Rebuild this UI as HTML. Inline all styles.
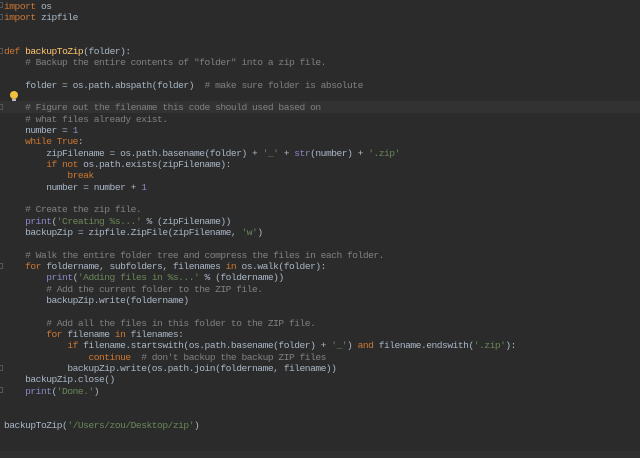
<!DOCTYPE html>
<html><head><meta charset="utf-8"><style>
html,body{margin:0;padding:0;background:#2b2b2b;width:640px;height:458px;overflow:hidden}
pre{position:absolute;left:4px;top:0.5px;margin:0;font-family:"Liberation Mono",monospace;font-size:9.6px;letter-spacing:-0.48px;line-height:11.33px;color:#a9b7c6;white-space:pre}
.k{color:#cc7832}.s{color:#6a8759}.c{color:#808080}.f{color:#ffc66d}.b{color:#8888c6}
.hl{position:absolute;left:0;width:640px;top:101px;height:12px;background:#323232}
.bot{position:absolute;left:0;top:451px;width:640px;height:7px;background:#313131}
.bulb{position:absolute;left:10px;top:91px;width:8px;height:8px;border-radius:50%;background:#f0c040}
.bulb:after{content:"";position:absolute;left:2px;top:8px;width:4px;height:2px;background:#bbb}
.g{position:absolute;left:0;width:3px;height:6px;border:1px solid #555;border-left:none;box-sizing:border-box}
</style></head><body>
<div class="hl"></div><div class="bot"></div>
<div class="g" style="top:2px"></div><div class="g" style="top:14px"></div><div class="g" style="top:48px"></div>
<div class="g" style="top:104px"></div><div class="g" style="top:263px"></div><div class="g" style="top:365px"></div><div class="g" style="top:387px"></div>
<div class="bulb"></div>
<pre><span class="k">import</span> os
<span class="k">import</span> zipfile


<span class="k">def</span> <span class="f">backupToZip</span>(folder):
    <span class="c"># Backup the entire contents of "folder" into a zip file.</span>

    folder = os.path.abspath(folder)  <span class="c"># make sure folder is absolute</span>

    <span class="c"># Figure out the filename this code should used based on</span>
    <span class="c"># what files already exist.</span>
    number = <span class="b">1</span>
    <span class="k">while</span> <span class="k">True</span>:
        zipFilename = os.path.basename(folder) + <span class="s">'_'</span> + <span class="b">str</span>(number) + <span class="s">'.zip'</span>
        <span class="k">if not</span> os.path.exists(zipFilename):
            <span class="k">break</span>
        number = number + <span class="b">1</span>

    <span class="c"># Create the zip file.</span>
    <span class="b">print</span>(<span class="s">'Creating %s...'</span> % (zipFilename))
    backupZip = zipfile.ZipFile(zipFilename, <span class="s">'w'</span>)

    <span class="c"># Walk the entire folder tree and compress the files in each folder.</span>
    <span class="k">for</span> foldername, subfolders, filenames <span class="k">in</span> os.walk(folder):
        <span class="b">print</span>(<span class="s">'Adding files in %s...'</span> % (foldername))
        <span class="c"># Add the current folder to the ZIP file.</span>
        backupZip.write(foldername)

        <span class="c"># Add all the files in this folder to the ZIP file.</span>
        <span class="k">for</span> filename <span class="k">in</span> filenames:
            <span class="k">if</span> filename.startswith(os.path.basename(folder) + <span class="s">'_'</span>) <span class="k">and</span> filename.endswith(<span class="s">'.zip'</span>):
                <span class="k">continue</span>  <span class="c"># don't backup the backup ZIP files</span>
            backupZip.write(os.path.join(foldername, filename))
    backupZip.close()
    <span class="b">print</span>(<span class="s">'Done.'</span>)


backupToZip(<span class="s">'/Users/zou/Desktop/zip'</span>)
</pre>
</body></html>
